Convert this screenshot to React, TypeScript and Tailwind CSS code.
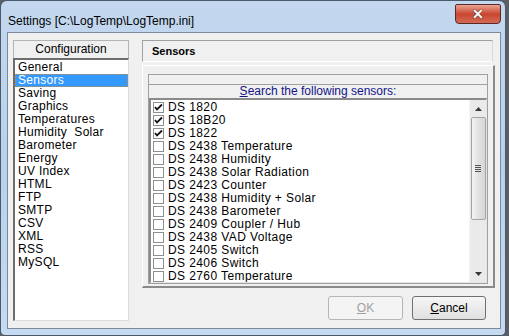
import React from 'react';

const configItems = [
  'General',
  'Sensors',
  'Saving',
  'Graphics',
  'Temperatures',
  'Humidity  Solar',
  'Barometer',
  'Energy',
  'UV Index',
  'HTML',
  'FTP',
  'SMTP',
  'CSV',
  'XML',
  'RSS',
  'MySQL',
];

const sensors = [
  { name: 'DS 1820', checked: true },
  { name: 'DS 18B20', checked: true },
  { name: 'DS 1822', checked: true },
  { name: 'DS 2438 Temperature', checked: false },
  { name: 'DS 2438 Humidity', checked: false },
  { name: 'DS 2438 Solar Radiation', checked: false },
  { name: 'DS 2423 Counter', checked: false },
  { name: 'DS 2438 Humidity + Solar', checked: false },
  { name: 'DS 2438 Barometer', checked: false },
  { name: 'DS 2409 Coupler / Hub', checked: false },
  { name: 'DS 2438 VAD Voltage', checked: false },
  { name: 'DS 2405 Switch', checked: false },
  { name: 'DS 2406 Switch', checked: false },
  { name: 'DS 2760 Temperature', checked: false },
];

const CheckBox = ({ checked }: { checked: boolean }) => (
  <div className="w-[11px] h-[11px] shrink-0 border border-[#8e8f8f] bg-white flex items-center justify-center">
    {checked && (
      <svg width="9" height="9" viewBox="0 0 9 9">
        <path d="M1 4 L3 6.5 L8 1.5" stroke="#111" strokeWidth="1.8" fill="none" />
      </svg>
    )}
  </div>
);

const ScrollBar = () => (
  <div className="w-[17px] shrink-0 bg-[#eaeaea] border-l border-[#f4f4f4] flex flex-col items-center">
    <div className="h-[17px] w-full flex items-center justify-center">
      <svg width="7" height="4" viewBox="0 0 7 4">
        <path d="M0 4 L3.5 0 L7 4 Z" fill="#3a3a3a" />
      </svg>
    </div>
    <div className="h-[103px] w-[15px] rounded-[2px] border border-[#a4a4a4] bg-gradient-to-r from-[#f4f4f4] via-[#e2e2e2] to-[#d6d6d6] flex flex-col items-center justify-center gap-[1px]">
      <div className="w-[6px] h-[1px] bg-[#555]" />
      <div className="w-[6px] h-[1px] bg-[#555]" />
      <div className="w-[6px] h-[1px] bg-[#555]" />
      <div className="w-[6px] h-[1px] bg-[#555]" />
    </div>
    <div className="flex-1" />
    <div className="h-[17px] w-full flex items-center justify-center">
      <svg width="7" height="4" viewBox="0 0 7 4">
        <path d="M0 0 L3.5 4 L7 0 Z" fill="#3a3a3a" />
      </svg>
    </div>
  </div>
);

export default function App() {
  return (
    <div
      className="w-[509px] h-[336px] overflow-hidden bg-[#5a5f66]"
      style={{ fontFamily: '"Liberation Sans", Arial, sans-serif' }}
    >
      <div className="w-[506px] h-[336px] rounded-t-[7px] rounded-b-[5px] border border-[#4b5a6b] bg-gradient-to-b from-[#c3d8ef] via-[#b9d1ec] to-[#c6dbf1] flex flex-col">
        {/* title bar */}
        <div className="h-[31px] flex items-start justify-between">
          <div className="pl-[7px] pt-[13px] text-[12px] leading-[14px] text-black">
            Settings [C:\LogTemp\LogTemp.ini]
          </div>
          <div className="mt-[3px] mr-[4px] w-[46px] h-[20px] rounded-b-[4px] rounded-t-[2px] border border-[#5c2a24] bg-gradient-to-b from-[#e8a393] via-[#c9452f] to-[#d26a56] flex items-center justify-center">
            <span
              className="text-white font-bold text-[14px] leading-none"
              style={{ textShadow: '0 0 1px #3b1b17, 0 0 1px #3b1b17' }}
            >
              ✕
            </span>
          </div>
        </div>

        {/* client area */}
        <div className="ml-[6px] w-[494px] h-[297px] border border-[#7c8b9c] bg-[#f0f0f0] flex pt-[7px] pl-[5px] text-[12px] leading-[13px] text-black">
          {/* left column */}
          <div className="w-[116px] flex flex-col">
            <div className="h-[18px] border border-b-0 border-[#b4b4b4] flex items-center justify-center text-[12px]">
              Configuration
            </div>
            <div className="h-[263px] border-l-2 border-t-2 border-l-[#6e6e6e] border-t-[#6e6e6e] border-r border-b border-r-[#dcdcdc] border-b-[#dcdcdc] bg-white pt-[1px] tracking-[0.3px]">
              {configItems.map((item, i) => (
                <div
                  key={item}
                  className={
                    i === 1
                      ? 'h-[13px] bg-[#3399ff] text-white border border-dotted border-[#c98a3a] pl-[2px] leading-[11px] whitespace-pre'
                      : 'h-[13px] pl-[3px] whitespace-pre'
                  }
                >
                  {item}
                </div>
              ))}
            </div>
          </div>

          {/* right column */}
          <div className="ml-[13px] w-[353px] flex flex-col">
            <div className="w-[351px] h-[22px] border-l border-t border-[#a0a0a0] border-r border-b border-r-[#dadada] border-b-white flex items-center pl-[9px] font-bold text-[11px]">
              Sensors
            </div>
            <div className="mt-[3px] h-[223px] border-l border-t border-white border-r-2 border-b-2 border-r-[#8a8a8a] border-b-[#8a8a8a] pt-[8px] pl-[5px] pr-[5px] pb-[2px]">
              <div className="h-full border border-[#a0a0a0] pt-[9px] flex flex-col">
                <div className="h-[14px] border-t border-[#a0a0a0] flex items-center justify-center text-[#13138a] text-[12px]">
                  <span>
                    <span className="underline">S</span>
                    earch the following sensors:
                  </span>
                </div>
                <div className="flex-1 flex border-l-2 border-t-2 border-l-[#8a8a8a] border-t-[#8a8a8a] border-r border-b border-r-[#e6e6e6] border-b-[#e6e6e6] bg-white overflow-hidden">
                  <div className="flex-1 pt-[1px] overflow-hidden tracking-[0.4px]">
                    {sensors.map((s) => (
                      <div key={s.name} className="h-[13px] flex items-center pl-[2px] gap-[4px] whitespace-nowrap">
                        <CheckBox checked={s.checked} />
                        <span>{s.name}</span>
                      </div>
                    ))}
                  </div>
                  <ScrollBar />
                </div>
              </div>
            </div>
            <div className="mt-[8px] flex justify-end gap-[9px] pr-[9px]">
              <div className="w-[75px] h-[24px] border border-[#b5b5b5] rounded-[3px] bg-[#f4f4f4] flex items-center justify-center text-[#a0a0a0] text-[12px]">
                <span>
                  <span className="underline">O</span>
                  K
                </span>
              </div>
              <div className="w-[74px] h-[24px] border border-[#707070] rounded-[3px] bg-gradient-to-b from-[#f6f6f6] to-[#e0e0e0] flex items-center justify-center text-[12px]">
                <span>
                  <span className="underline">C</span>
                  ancel
                </span>
              </div>
            </div>
          </div>
        </div>
      </div>
    </div>
  );
}
